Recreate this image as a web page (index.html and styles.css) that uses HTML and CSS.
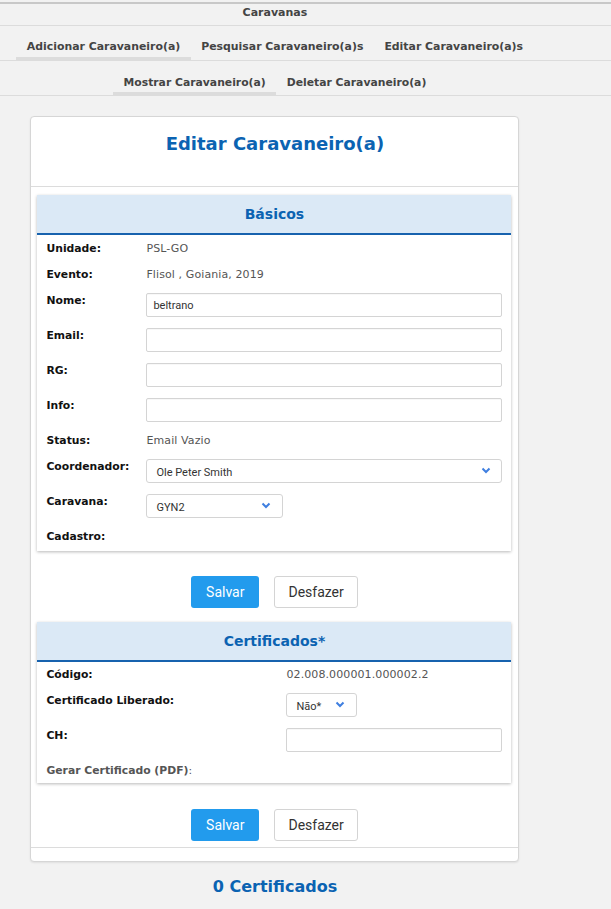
FILE: index.html
```html
<!DOCTYPE html>
<html lang="pt-BR">
<head>
    <meta charset="UTF-8">
    <meta name="viewport" content="width=device-width, initial-scale=1.0">
    <title>Caravanas</title>
    <link rel="stylesheet" href="styles.css">
</head>
<body>
    <div class="topbar">
        <div class="page-title">Caravanas</div>
        <div class="tab-row">
            <div class="tabs">
                <a class="tab active">Adicionar Caravaneiro(a)</a>
                <a class="tab">Pesquisar Caravaneiro(a)s</a>
                <a class="tab">Editar Caravaneiro(a)s</a>
            </div>
        </div>
        <div class="tab-row">
            <div class="tabs">
                <a class="tab active">Mostrar Caravaneiro(a)</a>
                <a class="tab">Deletar Caravaneiro(a)</a>
            </div>
        </div>
    </div>

    <div class="page">
        <div class="card">
            <div class="card-header">
                <h1>Editar Caravaneiro(a)</h1>
            </div>
            <div class="card-body">
                <div class="panel">
                    <div class="panel-header">Básicos</div>
                    <div class="panel-body basics">
                        <div class="row text"><label>Unidade:</label><span class="value">PSL-GO</span></div>
                        <div class="row text"><label>Evento:</label><span class="value">Flisol , Goiania, 2019</span></div>
                        <div class="row field"><label>Nome:</label><input type="text" value="beltrano"></div>
                        <div class="row field"><label>Email:</label><input type="text"></div>
                        <div class="row field"><label>RG:</label><input type="text"></div>
                        <div class="row field"><label>Info:</label><input type="text"></div>
                        <div class="row text"><label>Status:</label><span class="value">Email Vazio</span></div>
                        <div class="row field">
                            <label>Coordenador:</label>
                            <div class="select">
                                <span>Ole Peter Smith</span>
                                <svg width="10" height="7" viewBox="0 0 10 7"><path d="M1.5 1.5l3.5 3.5 3.5-3.5" fill="none" stroke="#3f7fe0" stroke-width="2"/></svg>
                            </div>
                        </div>
                        <div class="row field">
                            <label>Caravana:</label>
                            <div class="select select-caravana">
                                <span>GYN2</span>
                                <svg width="10" height="7" viewBox="0 0 10 7"><path d="M1.5 1.5l3.5 3.5 3.5-3.5" fill="none" stroke="#3f7fe0" stroke-width="2"/></svg>
                            </div>
                        </div>
                        <div class="row text"><label>Cadastro:</label><span class="value"></span></div>
                    </div>
                </div>

                <div class="actions">
                    <button class="btn btn-primary">Salvar</button>
                    <button class="btn btn-default">Desfazer</button>
                </div>

                <div class="panel">
                    <div class="panel-header">Certificados*</div>
                    <div class="panel-body certs">
                        <div class="row text"><label>Código:</label><span class="value">02.008.000001.000002.2</span></div>
                        <div class="row field">
                            <label>Certificado Liberado:</label>
                            <div class="select select-small">
                                <span>Não*</span>
                                <svg width="10" height="7" viewBox="0 0 10 7"><path d="M1.5 1.5l3.5 3.5 3.5-3.5" fill="none" stroke="#3f7fe0" stroke-width="2"/></svg>
                            </div>
                        </div>
                        <div class="row field"><label>CH:</label><input type="text"></div>
                        <div class="row text"><label class="muted">Gerar Certificado (PDF)<span class="colon">:</span></label><span class="value"></span></div>
                    </div>
                </div>

                <div class="actions actions-last">
                    <button class="btn btn-primary">Salvar</button>
                    <button class="btn btn-default">Desfazer</button>
                </div>
            </div>
            <div class="card-footer"></div>
        </div>

        <h2 class="total">0 Certificados</h2>
    </div>
</body>
</html>
```

FILE: styles.css
```css
body {
    margin: 0;
    background: #f2f2f2;
    font-family: "DejaVu Sans", sans-serif;
    color: #222;
}

.topbar {
    margin-top: 2px;
    border-top: 2px solid #c8c8c8;
}

.page-title {
    font-size: 11px;
    font-weight: bold;
    line-height: 13px;
    color: #444;
    text-align: center;
    padding: 2px 10% 6px 0;
    border-bottom: 1px solid #dcdcdc;
}

.tab-row {
    border-bottom: 1px solid #dcdcdc;
}

.tabs {
    width: 90%;
    display: flex;
    justify-content: center;
}

.tab {
    font-size: 10.9px;
    font-weight: bold;
    line-height: 13px;
    color: #444;
    padding: 14px 10.5px 4px;
    border-bottom: 3px solid transparent;
    cursor: pointer;
}

.tab-row + .tab-row .tab {
    font-size: 10.8px;
    padding-top: 15px;
    padding-bottom: 3px;
}

.tab.active {
    border-bottom-color: #dcdcdc;
}

.page {
    width: 90%;
    padding-top: 20px;
}

.card {
    width: 489px;
    margin: 0 auto;
    background: #fff;
    border: 1px solid #d6d6d6;
    border-radius: 4px;
    box-shadow: 0 1px 2px rgba(0, 0, 0, 0.08);
    box-sizing: border-box;
}

.card-header {
    padding: 16px 0 31px;
    border-bottom: 1px solid #dcdcdc;
    text-align: center;
}

.card-header h1 {
    margin: 0;
    font-size: 18px;
    line-height: 22px;
    color: #0b63b2;
}

.card-body {
    padding: 8px 7px 6px 6px;
}

.card-footer {
    height: 13px;
    border-top: 1px solid #dcdcdc;
}

.panel {
    background: #fff;
    box-shadow: 0 1px 3px rgba(0, 0, 0, 0.28);
}

.panel-header {
    height: 38px;
    line-height: 38px;
    background: #dbe9f6;
    border-bottom: 2px solid #1762ae;
    text-align: center;
    font-size: 14px;
    font-weight: bold;
    color: #0b63b2;
}

.panel-body {
    padding: 6px 9px 7px 9px;
}

.panel-body.certs {
    padding-top: 5px;
    padding-bottom: 5px;
}

.row {
    display: grid;
    grid-template-columns: 100px 1fr;
    align-items: start;
    margin-bottom: 11px;
}

.row:last-child {
    margin-bottom: 0;
}

.certs .row {
    grid-template-columns: 240px 1fr;
}

.row label {
    font-size: 10.8px;
    font-weight: bold;
    line-height: 15px;
    color: #111;
}

.row.field label {
    line-height: 13px;
    padding-top: 1px;
}

.row label.muted {
    color: #555;
}

.row label .colon {
    font-weight: normal;
}

.value {
    font-size: 11px;
    line-height: 15px;
    letter-spacing: 0.1px;
    color: #555;
}

input[type="text"] {
    height: 24px;
    box-sizing: border-box;
    border: 1px solid #d4d4d4;
    border-radius: 2px;
    padding: 0 6px;
    font-family: Roboto, sans-serif;
    font-size: 11px;
    color: #333;
    width: 100%;
    box-shadow: inset 0 1px 1px rgba(0, 0, 0, 0.03);
}

.select {
    height: 24px;
    box-sizing: border-box;
    border: 1px solid #d4d4d4;
    border-radius: 3px;
    display: flex;
    align-items: center;
    justify-content: space-between;
    padding: 2px 10px 0 9px;
    font-family: Roboto, sans-serif;
    font-size: 11px;
    color: #333;
}

.select svg {
    margin-top: -3px;
}

.select-caravana {
    width: 137px;
    padding-right: 11px;
}

.select-small {
    width: 71px;
    padding-right: 11px;
}

.actions {
    display: flex;
    justify-content: center;
    gap: 15px;
    margin: 25px 0 14px;
}

.actions-last {
    margin: 26px 0 0;
}

.btn {
    height: 32px;
    font-family: Roboto, sans-serif;
    font-size: 14px;
    border-radius: 3px;
    cursor: pointer;
}

.btn-primary {
    background: #229bed;
    color: #fff;
    border: none;
    padding: 0 15px;
}

.btn-default {
    background: #fff;
    color: #333;
    border: 1px solid #d4d4d4;
    padding: 0 13px;
}

.total {
    margin: 15px 0 0;
    text-align: center;
    font-size: 16px;
    color: #0b63b2;
}
```
